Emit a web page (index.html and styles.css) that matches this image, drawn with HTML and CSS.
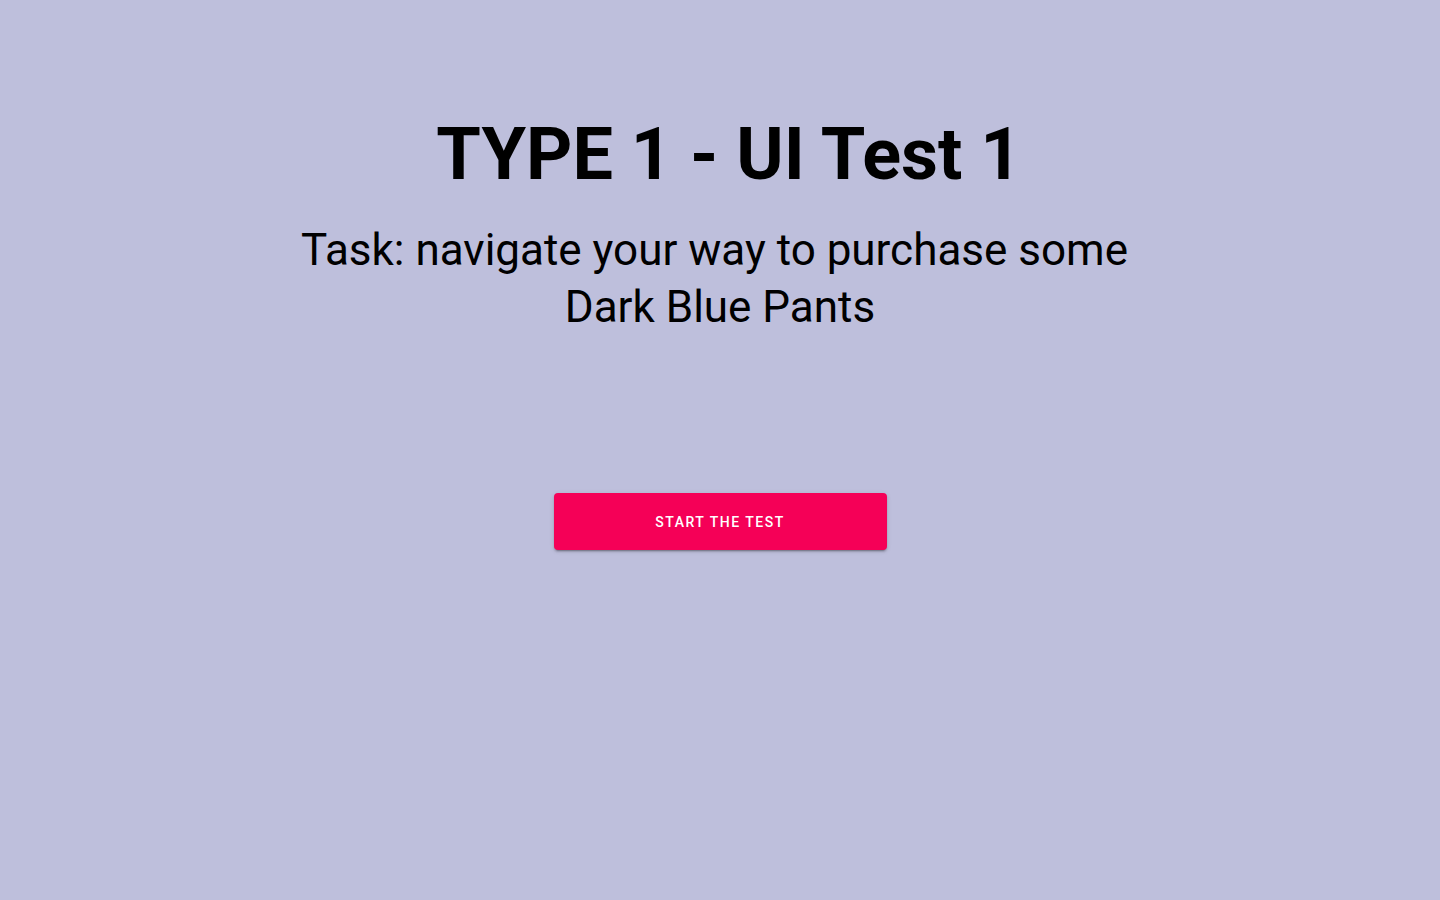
FILE: index.html
```html
<!DOCTYPE html>
<html lang="en">
<head>
<meta charset="utf-8">
<title>TYPE 1 - UI Test 1</title>
<link rel="stylesheet" href="styles.css">
</head>
<body>
<main class="intro">
  <h1 class="intro-title">TYPE 1 - UI Test 1</h1>
  <p class="intro-task">Task: navigate your way to purchase some&nbsp;<br>Dark Blue Pants</p>
  <button class="start-btn" type="button">Start the test</button>
</main>
</body>
</html>
```

FILE: styles.css
```css
html, body {
  margin: 0;
  padding: 0;
  height: 100%;
}
body {
  background: #bebfdc;
  font-family: Roboto, "Liberation Sans", Arial, sans-serif;
  color: #000;
}
.intro {
  display: flex;
  flex-direction: column;
  align-items: center;
  padding-top: 113px;
}
.intro-title {
  margin: 0;
  padding-left: 18px;
  font-size: 72px;
  line-height: 84px;
  font-weight: 700;
  text-align: center;
}
.intro-task {
  margin: 25px 0 0;
  max-width: 900px;
  font-size: 44px;
  line-height: 57px;
  font-weight: 400;
  text-align: center;
}
.start-btn {
  margin-top: 157px;
  width: 333px;
  height: 57px;
  border: none;
  border-radius: 4px;
  background: #f50057;
  color: #fff;
  font-family: Roboto, "Liberation Sans", Arial, sans-serif;
  font-size: 14px;
  font-weight: 500;
  letter-spacing: 1.5px;
  text-transform: uppercase;
  box-shadow: 0 3px 1px -2px rgba(0,0,0,0.2), 0 2px 2px 0 rgba(0,0,0,0.14), 0 1px 5px 0 rgba(0,0,0,0.12);
  cursor: pointer;
}
```
